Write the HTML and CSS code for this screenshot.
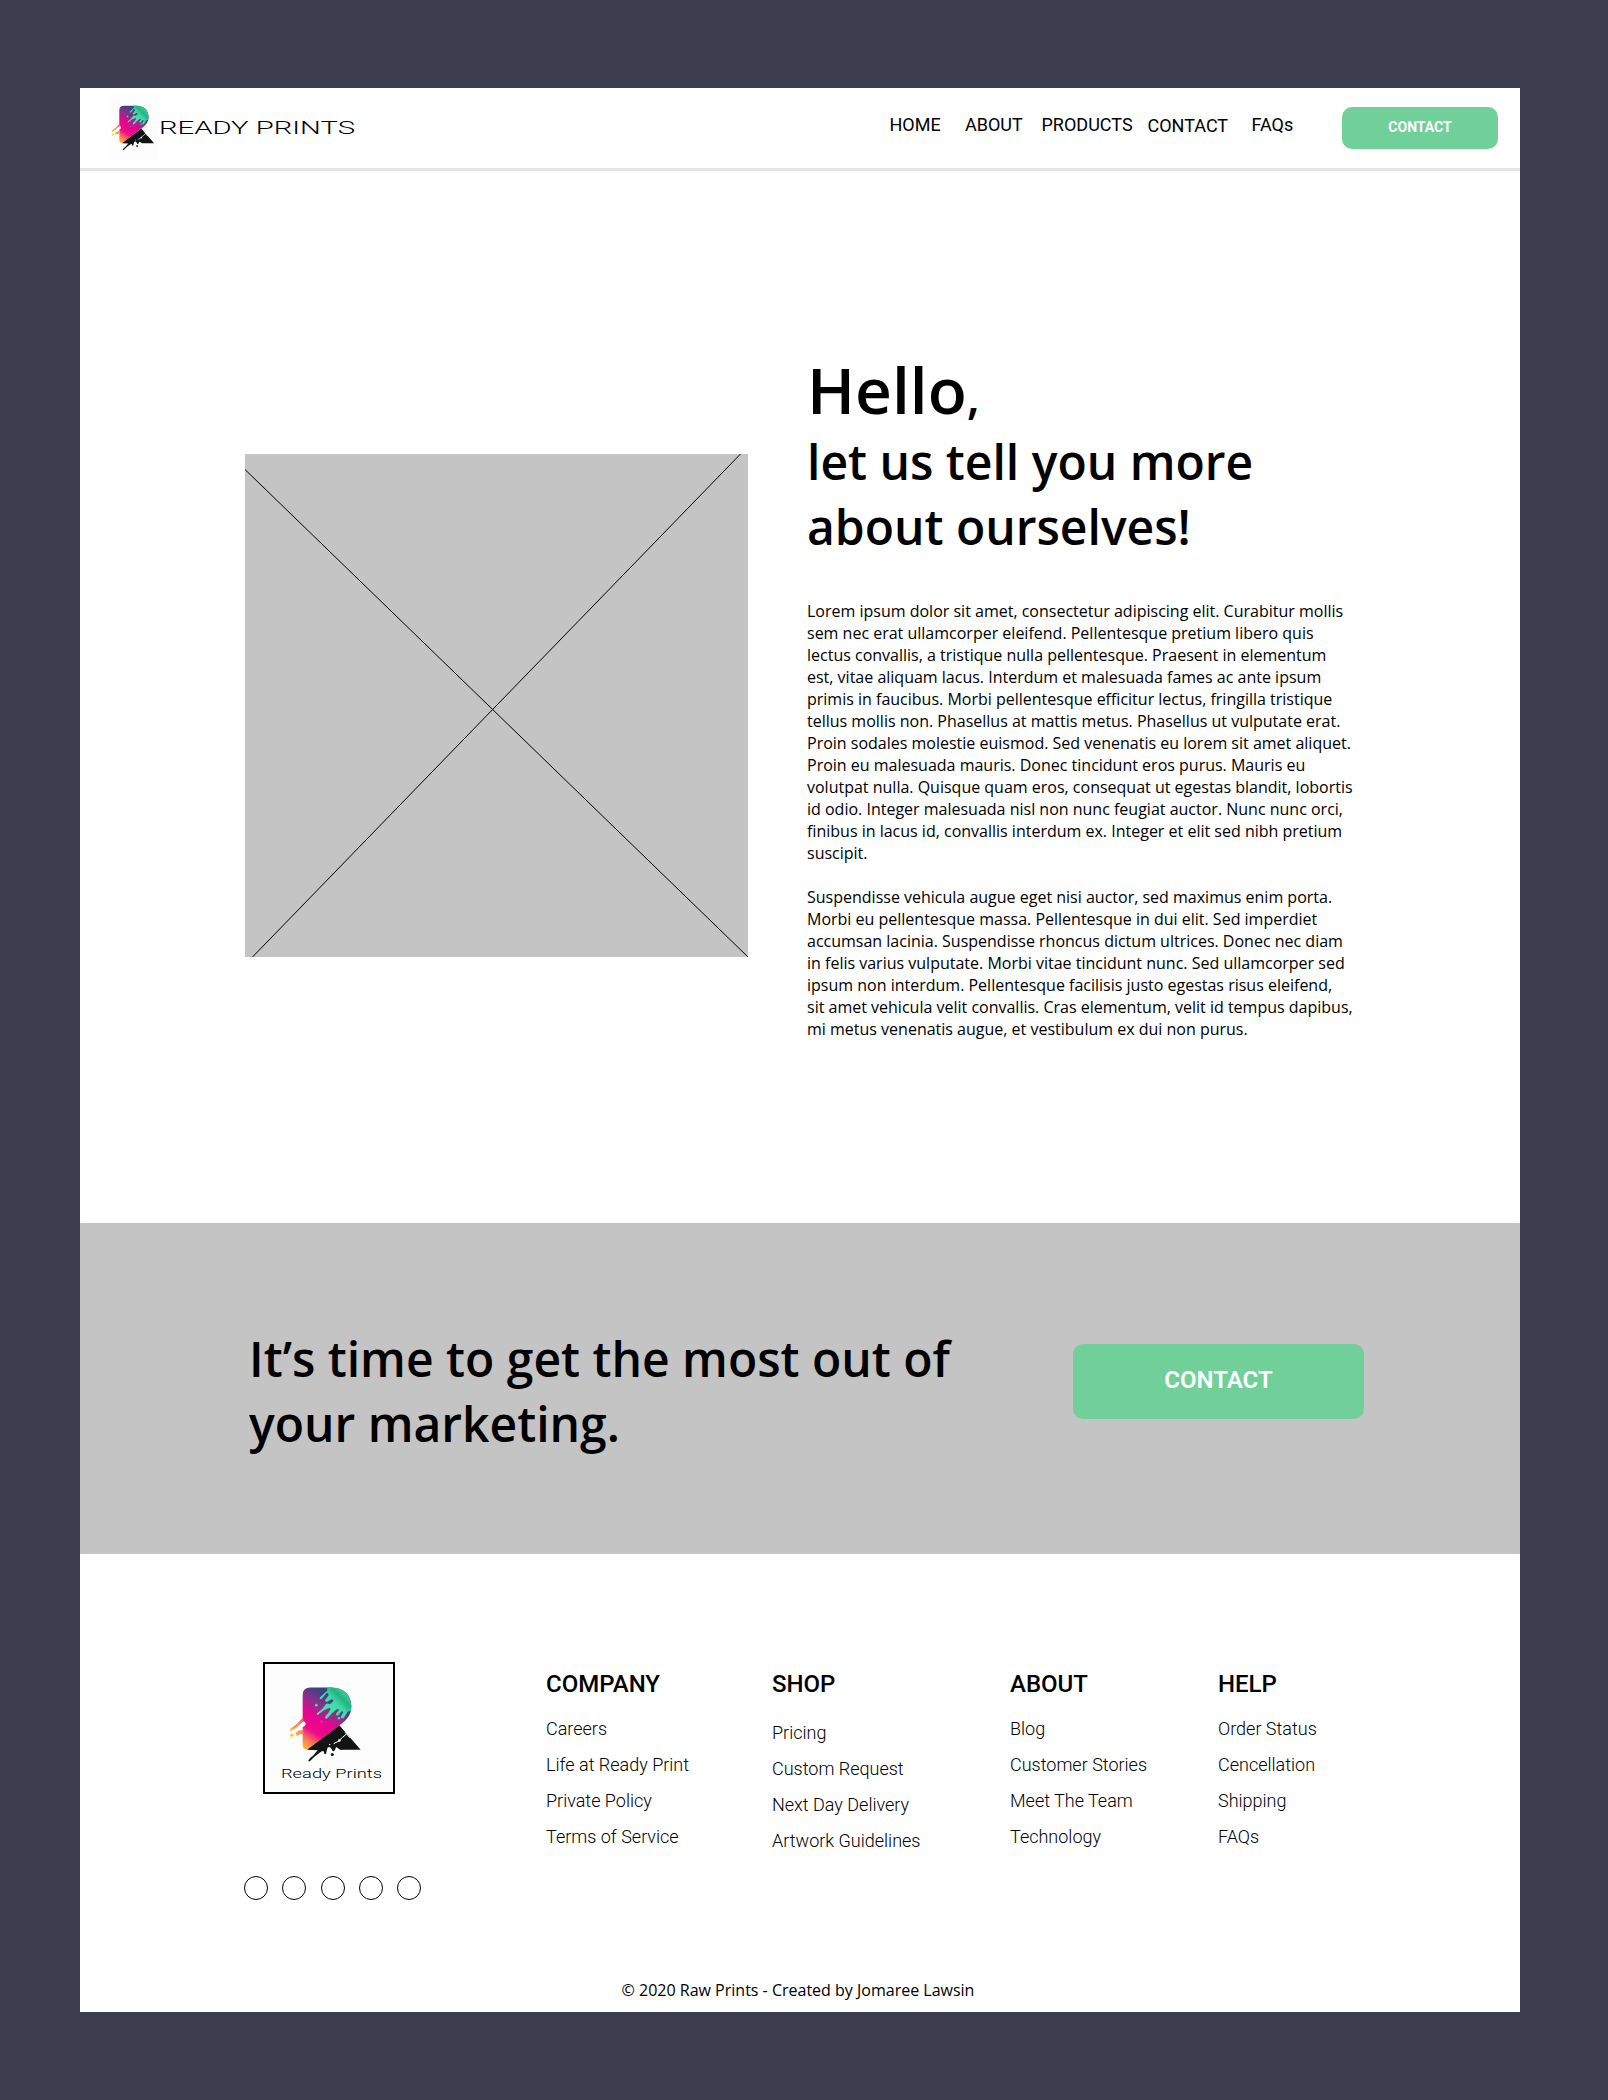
FILE: index.html
```html
<!DOCTYPE html>
<html lang="en">
<head>
<meta charset="utf-8">
<title>Ready Prints - About</title>
<link rel="stylesheet" href="styles.css">
</head>
<body>
<svg class="defs" width="0" height="0" aria-hidden="true">
  <defs>
    <linearGradient id="ink" gradientUnits="userSpaceOnUse" x1="217" y1="322" x2="322" y2="160">
      <stop offset="0" stop-color="#fdbb2d"/>
      <stop offset=".13" stop-color="#f9824f"/>
      <stop offset=".3" stop-color="#f0098b"/>
      <stop offset=".52" stop-color="#e5058f"/>
      <stop offset=".72" stop-color="#87318a"/>
      <stop offset=".88" stop-color="#3d4380"/>
      <stop offset="1" stop-color="#2c4a78"/>
    </linearGradient>
    <linearGradient id="mint" gradientUnits="userSpaceOnUse" x1="290" y1="200" x2="345" y2="145">
      <stop offset="0" stop-color="#45e3b0"/>
      <stop offset=".35" stop-color="#3ddca5"/>
      <stop offset=".65" stop-color="#27b183"/>
      <stop offset="1" stop-color="#3fd9a3"/>
    </linearGradient>
    <linearGradient id="splash" gradientUnits="userSpaceOnUse" x1="182" y1="280" x2="225" y2="250">
      <stop offset="0" stop-color="#fdc62b"/>
      <stop offset="1" stop-color="#f4607a"/>
    </linearGradient>
    <symbol id="mark" viewBox="178 138 219 230">
      <path fill="url(#ink)" d="M219 165Q219 142 242 142H305C345 142 365 168 365 198C365 226 350 241 328 256L233 328Q219 329 219 313Z"/>
      <path fill="url(#mint)" d="M292 142H305C345 142 365 170 365 198Q365 207 362 214Q356 211 353 216L343 232Q338 238 334 232Q333 227 341 217Q340 211 335 214L326 225Q318 228 319 221L328 209Q326 204 320 208L307 219L293 234Q287 238 286 232Q288 226 294 221L303 208Q302 202 296 204L282 211L265 224Q260 225 262 219L276 208L286 196Q288 190 294 190L301 192L311 183Q311 176 304 178L294 184Q286 187 286 180L297 165Q297 157 290 159L279 173Q271 181 270 173L281 162L293 151Z"/>
      <circle cx="260" cy="195" r="4" fill="#45e3b0"/>
      <circle cx="328" cy="234" r="3.5" fill="#45e3b0"/>
      <circle cx="276" cy="244" r="2" fill="#45e3b0"/>
      <path fill="#fff" d="M218 243Q229 243 228 252Q226 260 216 262L205 269Q203 275 210 274Q217 271 221 276L217 288H198V243Z"/>
      <path fill="url(#splash)" d="M220 232L202 251L182 266Q179 272 185 272L202 261Q211 250 222 243ZM221 271Q207 268 199 277Q195 286 204 286Q213 278 220 284Z"/>
      <circle cx="187" cy="285" r="5" fill="#fcc52c"/>
      <path fill="#121414" d="M329 255L393 329H338Q330 330 325 324Q318 318 317 327Q313 336 308 332Q306 325 302 322Q294 318 292 328L289 341Q284 345 283 337Q282 330 275 334L255 349L242 362Q237 366 236 361Q239 354 250 347L264 330L232 329Z"/>
      <circle cx="308" cy="343" r="4.5" fill="#121414"/>
      <path d="M350 282L338 292L325 304L313 310M347 277L360 292" fill="none" stroke="#fff" stroke-width="3" stroke-linecap="round"/>
      <circle cx="329" cy="301" r="4" fill="#fff"/>
      <circle cx="300" cy="313" r="2" fill="#fff"/>
    </symbol>
  </defs>
</svg>

<div class="page">
  <header class="header">
    <a class="brand">
      <span class="brand-tile"><svg class="brand-mark"><use href="#mark"/></svg></span>
      <svg class="brand-name" width="200" height="24"><text x="0" y="18" textLength="196" lengthAdjust="spacingAndGlyphs">READY PRINTS</text></svg>
    </a>
    <nav class="nav">
      <a>HOME</a><a>ABOUT</a><a>PRODUCTS</a><a class="lowered">CONTACT</a><a>FAQs</a>
    </nav>
    <a class="button button-small">CONTACT</a>
  </header>

  <main class="about">
    <svg class="placeholder" width="503" height="503" viewBox="0 0 503 503">
      <path d="M0 15.5L503 503M495.500 0L7.500 503"/>
    </svg>
    <section class="story">
      <h1>Hello<span class="comma">,</span></h1>
      <h2>let us tell you more<br>about ourselves!</h2>
      <p>Lorem ipsum dolor sit amet, consectetur adipiscing elit. Curabitur mollis<br>sem nec erat ullamcorper eleifend. Pellentesque pretium libero quis<br>lectus convallis, a tristique nulla pellentesque. Praesent in elementum<br>est, vitae aliquam lacus. Interdum et malesuada fames ac ante ipsum<br>primis in faucibus. Morbi pellentesque efficitur lectus, fringilla tristique<br>tellus mollis non. Phasellus at mattis metus. Phasellus ut vulputate erat.<br>Proin sodales molestie euismod. Sed venenatis eu lorem sit amet aliquet.<br>Proin eu malesuada mauris. Donec tincidunt eros purus. Mauris eu<br>volutpat nulla. Quisque quam eros, consequat ut egestas blandit, lobortis<br>id odio. Integer malesuada nisl non nunc feugiat auctor. Nunc nunc orci,<br>finibus in lacus id, convallis interdum ex. Integer et elit sed nibh pretium<br>suscipit.</p>
      <p>Suspendisse vehicula augue eget nisi auctor, sed maximus enim porta.<br>Morbi eu pellentesque massa. Pellentesque in dui elit. Sed imperdiet<br>accumsan lacinia. Suspendisse rhoncus dictum ultrices. Donec nec diam<br>in felis varius vulputate. Morbi vitae tincidunt nunc. Sed ullamcorper sed<br>ipsum non interdum. Pellentesque facilisis justo egestas risus eleifend,<br>sit amet vehicula velit convallis. Cras elementum, velit id tempus dapibus,<br>mi metus venenatis augue, et vestibulum ex dui non purus.</p>
    </section>
  </main>

  <section class="cta">
    <h2>It’s time to get the most out of<br>your marketing.</h2>
    <a class="button button-large">CONTACT</a>
  </section>

  <footer class="footer">
    <div class="footer-grid">
      <div class="identity">
        <div class="logo-box">
          <svg class="logo-mark"><use href="#mark"/></svg>
          <svg class="logo-name" width="104" height="18"><text x="1" y="12" textLength="101" lengthAdjust="spacingAndGlyphs">Ready Prints</text></svg>
        </div>
        <div class="social"><i></i><i></i><i></i><i></i><i></i></div>
      </div>
      <div class="links"><h3>COMPANY</h3><a>Careers</a><a>Life at Ready Print</a><a>Private Policy</a><a>Terms of Service</a></div>
      <div class="links links-shop"><h3>SHOP</h3><a>Pricing</a><a>Custom Request</a><a>Next Day Delivery</a><a>Artwork Guidelines</a></div>
      <div class="links"><h3>ABOUT</h3><a>Blog</a><a>Customer Stories</a><a>Meet The Team</a><a>Technology</a></div>
      <div class="links"><h3>HELP</h3><a>Order Status</a><a>Cencellation</a><a>Shipping</a><a>FAQs</a></div>
    </div>
    <p class="copyright">© 2020 Raw Prints - Created by Jomaree Lawsin</p>
  </footer>
</div>
</body>
</html>
```
FILE: styles.css
```css
* { box-sizing: border-box; }
body {
  margin: 0;
  padding: 88px 88px 88px 80px;
  background: #3c3e4f;
  color: #000;
  font-family: "Open Sans", sans-serif;
}
h1, h2, h3, p { margin: 0; }
.defs { display: block; }
.page {
  width: 1440px;
  height: 1924px;
  background: #fff;
  display: flex;
  flex-direction: column;
}

/* Header */
.header {
  height: 83px;
  border-bottom: 3px solid #e5e5e5;
  display: flex;
  align-items: flex-start;
  font-family: Roboto, sans-serif;
}
.brand { display: flex; width: 809.5px; padding: 6px 0 0 30px; }
.brand-tile { width: 49px; height: 67px; background: #fdfdfd; padding: 11px 0 0 1px; }
.brand-mark { display: block; width: 44px; height: 46px; }
.brand-name { display: block; margin: 21.500px 0 0; overflow: visible; }
.brand-name text { font: 300 19.200px Roboto, sans-serif; }
.nav {
  display: grid;
  grid-template-columns: 75.500px 76.500px 106px 104px 90.500px;
  padding-top: 19px;
  font-size: 18px;
  line-height: 36px;
}
.lowered { padding-top: 1px; }
.button {
  display: block;
  background: #71d099;
  color: #fff;
  border-radius: 10px;
  text-align: center;
  font-family: Roboto, sans-serif;
  font-weight: 700;
}
.button-small { width: 156px; height: 42px; margin-top: 19px; font-size: 14px; line-height: 41px; }

/* About */
.about { height: 1052px; display: flex; }
.placeholder { display: block; margin: 283px 59px 0 165px; background: #c4c4c4; }
.placeholder path { fill: none; stroke: #000; stroke-width: 1; }
.story { padding-top: 180px; white-space: nowrap; }
.story h1 { font-size: 64px; line-height: 78px; font-weight: 600; }
.comma { font-size: 48px; line-height: 1; font-weight: 600; }
h2 { font-size: 48px; line-height: 65px; font-weight: 600; }
.story p { font-size: 16px; line-height: 22px; margin-top: 22px; }
.story h2 + p { margin-top: 41px; }

/* Call to action */
.cta { height: 331px; background: #c4c4c4; display: flex; padding: 103px 156px 0 169px; justify-content: space-between; }
.button-large { width: 291px; height: 75px; margin-top: 18px; font-size: 24px; line-height: 72px; font-weight: 600; }

/* Footer */
.footer { flex: 1; padding-top: 108px; }
.footer-grid { display: grid; grid-template-columns: 382px 226px 238px 208px 1fr; padding-left: 84px; height: 306px; }
.identity { display: flex; flex-direction: column; gap: 82px; }
.logo-box { width: 132px; height: 132px; margin-left: 99px; border: 2px solid #000; background: #fdfdfd; display: flex; flex-direction: column; }
.logo-mark { width: 73px; height: 77px; margin: 22px 0 0 24px; flex: none; }
.logo-name { display: block; margin: 3px 0 0 15px; overflow: visible; }
.logo-name text { font: 300 13px Roboto, sans-serif; }
.social { display: flex; gap: 14.250px; padding-left: 80px; }
.social i { width: 24px; height: 24px; flex: none; border: 1px solid #000; border-radius: 50%; }
.links { font-family: Roboto, sans-serif; display: flex; flex-direction: column; padding-top: 4px; white-space: nowrap; }
.links h3 { font-size: 24px; line-height: 36px; font-weight: 500; margin-bottom: 9px; }
.links a { font-size: 18px; line-height: 36px; font-weight: 300; }
.links-shop h3 { margin-bottom: 13px; }
.copyright { text-align: center; font-size: 16px; line-height: 22px; margin-top: 11px; padding-right: 4px; }
```
